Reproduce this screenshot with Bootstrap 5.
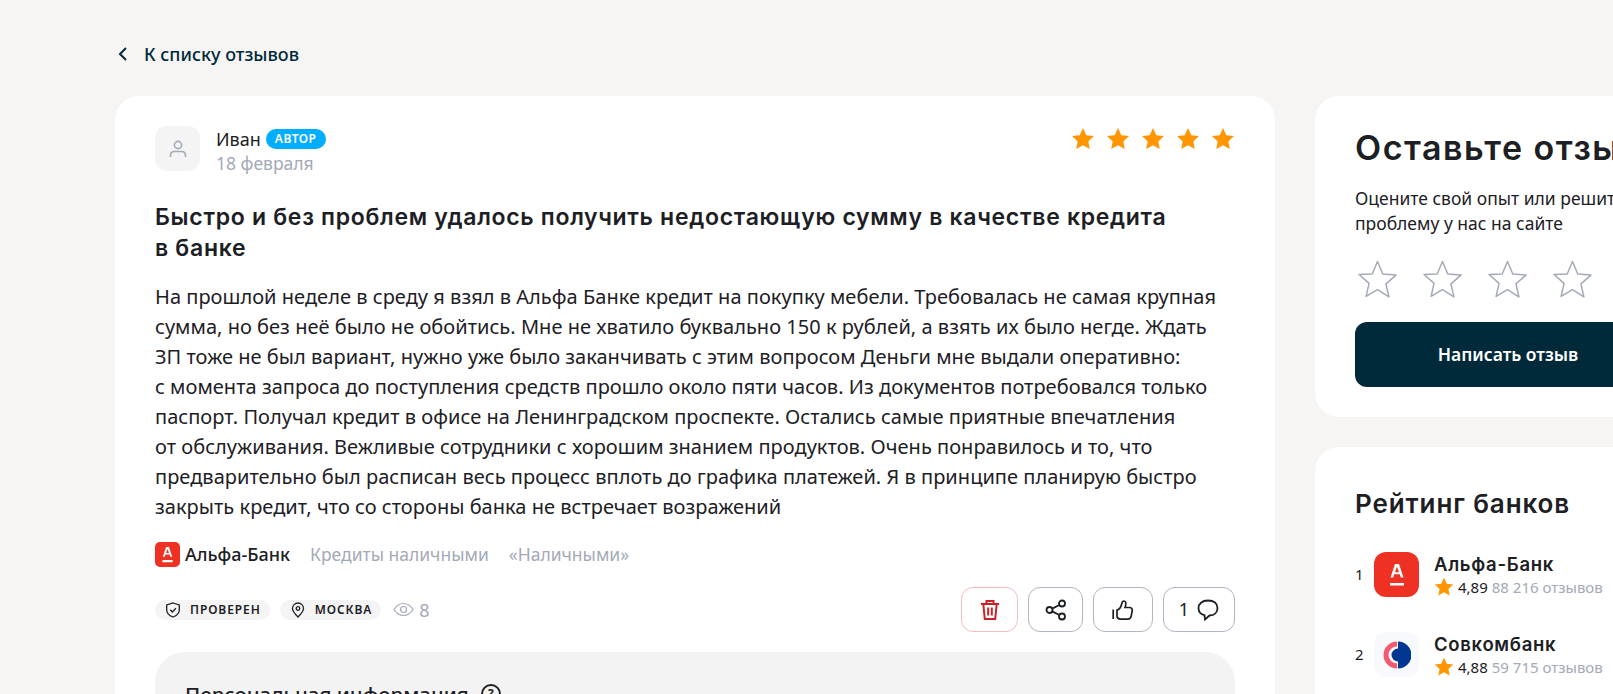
<!DOCTYPE html>
<html lang="ru">
<head>
  <meta charset="UTF-8">
  <meta name="viewport" content="width=device-width, initial-scale=1">
  <title>Отзыв</title>
  <link href="https://cdn.jsdelivr.net/npm/bootstrap@5.3.3/dist/css/bootstrap.min.css" rel="stylesheet">
  <style>
    html, body { height: 100%; overflow: hidden; }
    body { background: #f6f5f3; color: #1c2024; font-family: "Noto Sans", "Open Sans", sans-serif; }
    .page-wrap { width: 1800px; padding: 0 0 0 115px; }
    .back-link { height: 96px; padding-top: 41px; align-items: flex-start; color: #00293a; font-size: 18px; font-weight: 500; line-height: 26px; text-decoration: none; }
    .back-link svg { margin: 5px 16px 0 3px; }
    .review-card { width: 1160px; border: 0; border-radius: 24px; padding: 30px 40px 0; }
    .side-col { width: 386px; margin-left: 40px; }
    .side-card { border: 0; border-radius: 24px; padding: 32px 40px; }
    .side-card:first-child { padding-bottom: 30px; }
    .side-card + .side-card { margin-top: 30px; }
    .avatar-box { width: 45px; height: 45px; border-radius: 12px; background: #f4f4f5; }
    .author-name { font-size: 18px; line-height: 20px; margin-top: 3px; }
    .author-chip { background: #00aeff; color: #fff; font-size: 12px; font-weight: 600; line-height: 20px; padding: 0 9px; border-radius: 10px; letter-spacing: .5px; margin-left: 5px; }
    .review-date { color: #a3a9b7; font-size: 17.5px; line-height: 24px; margin-top: 2px; }
    .star-row { gap: 11px; margin-top: 1px; }
    .review-title { font-family: Inter, sans-serif; font-size: 23px; font-weight: 600; line-height: 31px; margin: 27px 0 18px; letter-spacing: .7px; }
    .review-text { font-size: 20px; line-height: 30px; letter-spacing: .03px; margin-bottom: 19px; }
    .bank-row { margin-bottom: 19px; }
    .bank-mark { width: 25px; height: 25px; border-radius: 5px; background: #ef3124; }
    .bank-name { font-size: 18px; font-weight: 500; margin-left: 5px; margin-right: 20px; }
    .tag-link { color: #a3a9b7; font-size: 17.5px; margin-right: 20px; }
    .info-chip { background: #f4f4f5; height: 20px; border-radius: 10px; padding: 0 9px 0 10px; gap: 9px; font-size: 12px; font-weight: 600; letter-spacing: .9px; margin-right: 10px; }
    .view-count { color: #a3a9b7; font-size: 18px; line-height: 24px; gap: 5px; margin-left: 2px; }
    .tool-group { gap: 10px; }
    .tool-btn { height: 45px; border: 1px solid #b0b6c2; border-radius: 12px; background: #fff; padding: 0; font-size: 18px; color: #1c2024; }
    .tool-del { width: 57px; border-color: #f7bcbc; }
    .tool-share { width: 55px; }
    .tool-like { width: 60px; }
    .tool-comment { width: 72px; }
    .personal-box { background: #f3f3f3; border-radius: 30px; padding: 28px 30px; margin-top: 20px; height: 200px; }
    .personal-title { font-size: 20.5px; font-weight: 500; line-height: 28px; }
    .help-mark { width: 20px; height: 20px; border: 2px solid #1c2024; border-radius: 50%; font-size: 12px; font-weight: 700; line-height: 16px; text-align: center; margin-left: 12px; }
    .side-title { font-family: Inter, sans-serif; font-size: 34px; font-weight: 600; line-height: 40px; letter-spacing: 1.5px; margin-bottom: 18px; }
    .side-text { font-size: 17.5px; line-height: 25px; margin-bottom: 24px; }
    .pick-stars { gap: 24px; margin-bottom: 24px; padding-left: 2px; }
    .write-btn { height: 65px; background: #00293a; color: #fff; border: 0; border-radius: 12px; font-size: 17.5px; font-weight: 600; }
    .rating-title { font-family: Inter, sans-serif; font-size: 26px; font-weight: 600; line-height: 34px; letter-spacing: .9px; margin: 8px 0 31px; }
    .rating-row { height: 45px; margin-bottom: 35px; }
    .rating-num { width: 19px; font-size: 15px; }
    .rating-logo { width: 45px; height: 45px; border-radius: 12px; margin-right: 15px; }
    .logo-alfa { background: #ef3124; }
    .logo-sovcom { background: #f8f9fc; }
    .rating-name { font-family: Inter, sans-serif; font-size: 18.5px; font-weight: 600; line-height: 24px; letter-spacing: .7px; }
    .rating-meta { font-size: 15px; line-height: 22px; }
    .rating-meta span { color: #a3a9b7; }
  </style>
</head>
<body>
<div class="page-wrap">
  <a href="#" class="back-link d-flex">
    <svg width="10" height="16" viewBox="0 0 10 16" fill="none" stroke="#00293a" stroke-width="2"><path d="M8 2 2 8l6 6"/></svg>
    К списку отзывов
  </a>

  <div class="d-flex align-items-start">
    <div class="card review-card">
      <div class="d-flex justify-content-between align-items-start">
        <div class="d-flex">
          <div class="avatar-box d-flex align-items-center justify-content-center me-3">
            <svg width="20" height="20" viewBox="0 0 20 20" fill="none" stroke="#a3a9b7" stroke-width="1.6"><circle cx="10" cy="6" r="3.6"/><path d="M2.5 18v-1.5c0-2.5 1.8-4 4-4h7c2.200 0 4 1.500 4 4V18"/></svg>
          </div>
          <div>
            <div class="d-flex align-items-center author-name">Иван <span class="author-chip">АВТОР</span></div>
            <div class="review-date">18 февраля</div>
          </div>
        </div>
        <div class="d-flex star-row">
          <svg width="24" height="24" viewBox="0 0 24 24" fill="#ff9500"><path d="M12 1l3.300 7.200 7.700.9-5.700 5.300 1.500 7.700L12 18.200 5.200 22.100l1.500-7.700L1 9.100l7.700-.9z"/></svg>
          <svg width="24" height="24" viewBox="0 0 24 24" fill="#ff9500"><path d="M12 1l3.300 7.200 7.700.9-5.700 5.300 1.500 7.700L12 18.200 5.200 22.100l1.500-7.700L1 9.100l7.700-.9z"/></svg>
          <svg width="24" height="24" viewBox="0 0 24 24" fill="#ff9500"><path d="M12 1l3.300 7.200 7.700.9-5.700 5.300 1.500 7.700L12 18.200 5.200 22.100l1.500-7.700L1 9.100l7.700-.9z"/></svg>
          <svg width="24" height="24" viewBox="0 0 24 24" fill="#ff9500"><path d="M12 1l3.300 7.200 7.700.9-5.700 5.300 1.500 7.700L12 18.200 5.200 22.100l1.500-7.700L1 9.100l7.700-.9z"/></svg>
          <svg width="24" height="24" viewBox="0 0 24 24" fill="#ff9500"><path d="M12 1l3.300 7.200 7.700.9-5.700 5.300 1.500 7.700L12 18.200 5.200 22.100l1.500-7.700L1 9.100l7.700-.9z"/></svg>
        </div>
      </div>

      <h1 class="review-title">Быстро и без проблем удалось получить недостающую сумму в качестве кредита<br>в банке</h1>
      <p class="review-text">На прошлой неделе в среду я взял в Альфа Банке кредит на покупку мебели. Требовалась не самая крупная<br>сумма, но без неё было не обойтись. Мне не хватило буквально 150 к рублей, а взять их было негде. Ждать<br>ЗП тоже не был вариант, нужно уже было заканчивать с этим вопросом Деньги мне выдали оперативно:<br>с момента запроса до поступления средств прошло около пяти часов. Из документов потребовался только<br>паспорт. Получал кредит в офисе на Ленинградском проспекте. Остались самые приятные впечатления<br>от обслуживания. Вежливые сотрудники с хорошим знанием продуктов. Очень понравилось и то, что<br>предварительно был расписан весь процесс вплоть до графика платежей. Я в принципе планирую быстро<br>закрыть кредит, что со стороны банка не встречает возражений</p>

      <div class="d-flex align-items-center bank-row">
        <span class="bank-mark d-flex align-items-center justify-content-center">
          <svg width="11" height="16" viewBox="0 0 14 22" fill="#fff"><path d="M5 0h4l4.500 13.500h-2.700l-1-3.200H4.200l-1 3.200H.5zM7 2.800 5 8.300h4zM0 18h14v3H0z" fill-rule="evenodd"/></svg>
        </span>
        <span class="bank-name">Альфа-Банк</span>
        <span class="tag-link">Кредиты наличными</span>
        <span class="tag-link">«Наличными»</span>
      </div>

      <div class="d-flex justify-content-between align-items-center">
        <div class="d-flex align-items-center">
          <span class="info-chip d-flex align-items-center">
            <svg width="16" height="16" viewBox="0 0 15 16" fill="none" stroke="#1c2024" stroke-width="1.300"><path d="M7.500 1 13.800 3v5c0 3.500-3 5.800-6.300 7C4.200 13.800 1.200 11.500 1.200 8V3z"/><path d="M4.800 7.800 6.900 10l3.500-3.700"/></svg>
            ПРОВЕРЕН
          </span>
          <span class="info-chip d-flex align-items-center">
            <svg width="16" height="16" viewBox="0 0 15 16" fill="none" stroke="#1c2024" stroke-width="1.300"><path d="M7.500 15C4.500 12 2 9.500 2 6.500a5.500 5.500 0 0 1 11 0C13 9.500 10.500 12 7.500 15z"/><circle cx="7.500" cy="6.500" r="1.800"/></svg>
            МОСКВА
          </span>
          <span class="view-count d-flex align-items-center">
            <svg width="21" height="15" viewBox="0 0 21 15" fill="none" stroke="#a3a9b7" stroke-width="1.200"><path d="M1 7.500C3.500 3.500 6.800 1.500 10.500 1.500s7 2 9.500 6c-2.500 4-5.800 6-9.500 6s-7-2-9.500-6z"/><circle cx="10.500" cy="7.500" r="3"/></svg>
            8
          </span>
        </div>
        <div class="d-flex tool-group">
          <button class="btn tool-btn tool-del d-flex align-items-center justify-content-center" aria-label="Удалить">
            <svg width="20" height="21" viewBox="0 0 20 21" fill="none" stroke="#cb2026" stroke-width="2"><path d="M1 5h18M6.500 5V2h7v3M3.300 5l1.500 15h10.400L16.700 5M8.200 8.500v8M11.800 8.500v8"/></svg>
          </button>
          <button class="btn tool-btn tool-share d-flex align-items-center justify-content-center" aria-label="Поделиться">
            <svg width="22" height="22" viewBox="0 0 22 22" fill="none" stroke="#1c2024" stroke-width="1.800"><circle cx="4.500" cy="11" r="3"/><circle cx="17" cy="4.500" r="3"/><circle cx="17" cy="17.500" r="3"/><path d="M7.200 9.600 14.300 6M7.200 12.400l7.100 3.600"/></svg>
          </button>
          <button class="btn tool-btn tool-like d-flex align-items-center justify-content-center" aria-label="Нравится">
            <svg width="22" height="22" viewBox="0 0 22 22" fill="none" stroke="#1c2024" stroke-width="1.700"><path d="M1.200 10.500V20"/><path d="M5 11c2-.5 4-3 4.500-5.500.3-1.500.8-3.500 2.500-3.500 2 0 2.500 3 1 6.500h4.500c2 0 3 1.500 2.700 3.200l-1 5.500c-.4 2-1.700 3-3.500 3H9c-2.500 0-4-1.500-4-3.500z"/></svg>
          </button>
          <button class="btn tool-btn tool-comment d-flex align-items-center justify-content-center gap-2">1
            <svg width="22" height="22" viewBox="0 0 22 22" fill="none" stroke="#1c2024" stroke-width="1.800"><path d="M11 1.500c6 0 9.500 3 9.500 7.500s-3 7.500-8 7.500l-4.500 4-.5-4.300C4 15.500 1.500 13 1.500 9S5 1.500 11 1.500z"/></svg>
          </button>
        </div>
      </div>

      <div class="personal-box">
        <div class="d-flex align-items-center personal-title">Персональная информация <span class="help-mark">?</span></div>
      </div>
    </div>

    <div class="side-col">
      <div class="card side-card">
        <div class="side-title text-nowrap">Оставьте отзыв</div>
        <p class="side-text">Оцените свой опыт или решите<br>проблему у нас на сайте</p>
        <div class="d-flex pick-stars">
          <svg width="41" height="38" viewBox="0 0 38 36" fill="none" stroke="#a3a9b7" stroke-width="1.400" stroke-linejoin="round"><path d="M19 1.500l5 11.700 12.500 1.100-9.500 8.300 2.800 12.400L19 28l-10.800 6.500L11 22.100l-9.500-8.300L14 13.200z"/></svg>
          <svg width="41" height="38" viewBox="0 0 38 36" fill="none" stroke="#a3a9b7" stroke-width="1.400" stroke-linejoin="round"><path d="M19 1.500l5 11.700 12.500 1.100-9.500 8.300 2.800 12.400L19 28l-10.800 6.500L11 22.100l-9.500-8.300L14 13.200z"/></svg>
          <svg width="41" height="38" viewBox="0 0 38 36" fill="none" stroke="#a3a9b7" stroke-width="1.400" stroke-linejoin="round"><path d="M19 1.500l5 11.700 12.500 1.100-9.500 8.300 2.800 12.400L19 28l-10.800 6.500L11 22.100l-9.500-8.300L14 13.200z"/></svg>
          <svg width="41" height="38" viewBox="0 0 38 36" fill="none" stroke="#a3a9b7" stroke-width="1.400" stroke-linejoin="round"><path d="M19 1.500l5 11.700 12.500 1.100-9.500 8.300 2.800 12.400L19 28l-10.800 6.500L11 22.100l-9.500-8.300L14 13.200z"/></svg>
          <svg width="41" height="38" viewBox="0 0 38 36" fill="none" stroke="#a3a9b7" stroke-width="1.400" stroke-linejoin="round"><path d="M19 1.500l5 11.700 12.500 1.100-9.500 8.300 2.800 12.400L19 28l-10.800 6.500L11 22.100l-9.500-8.300L14 13.200z"/></svg>
        </div>
        <button class="btn write-btn w-100">Написать отзыв</button>
      </div>

      <div class="card side-card">
        <div class="rating-title">Рейтинг банков</div>
        <div class="d-flex align-items-center rating-row">
          <span class="rating-num">1</span>
          <span class="rating-logo logo-alfa d-flex align-items-center justify-content-center">
            <svg width="14" height="22" viewBox="0 0 14 22" fill="#fff"><path d="M5 0h4l4.500 13.500h-2.700l-1-3.200H4.200l-1 3.200H.5zM7 2.800 5 8.300h4zM0 19h14v2.500H0z" fill-rule="evenodd"/></svg>
          </span>
          <div>
            <div class="rating-name">Альфа-Банк</div>
            <div class="rating-meta d-flex align-items-center gap-1">
              <svg width="20" height="20" viewBox="0 0 24 24" fill="#ff9500"><path d="M12 1l3.300 7.200 7.700.9-5.700 5.300 1.500 7.700L12 18.200 5.200 22.100l1.500-7.700L1 9.100l7.700-.9z"/></svg>
              4,89 <span>88 216 отзывов</span>
            </div>
          </div>
        </div>
        <div class="d-flex align-items-center rating-row">
          <span class="rating-num">2</span>
          <span class="rating-logo logo-sovcom d-flex align-items-center justify-content-center">
            <svg width="28" height="28" viewBox="0 0 28 28"><path d="M14 .5a13.500 13.500 0 0 0 0 27v-5a8.500 8.500 0 0 1 0-17z" fill="#f5596f"/><path d="M15 .5a13.500 13.500 0 0 1 0 27v-7a6.500 6.500 0 0 1 0-13z" fill="#003791"/></svg>
          </span>
          <div>
            <div class="rating-name">Совкомбанк</div>
            <div class="rating-meta d-flex align-items-center gap-1">
              <svg width="20" height="20" viewBox="0 0 24 24" fill="#ff9500"><path d="M12 1l3.300 7.200 7.700.9-5.700 5.300 1.500 7.700L12 18.200 5.200 22.100l1.500-7.700L1 9.100l7.700-.9z"/></svg>
              4,88 <span>59 715 отзывов</span>
            </div>
          </div>
        </div>
      </div>
    </div>
  </div>
</div>

<script src="https://cdn.jsdelivr.net/npm/bootstrap@5.3.3/dist/js/bootstrap.bundle.min.js"></script>
</body>
</html>
